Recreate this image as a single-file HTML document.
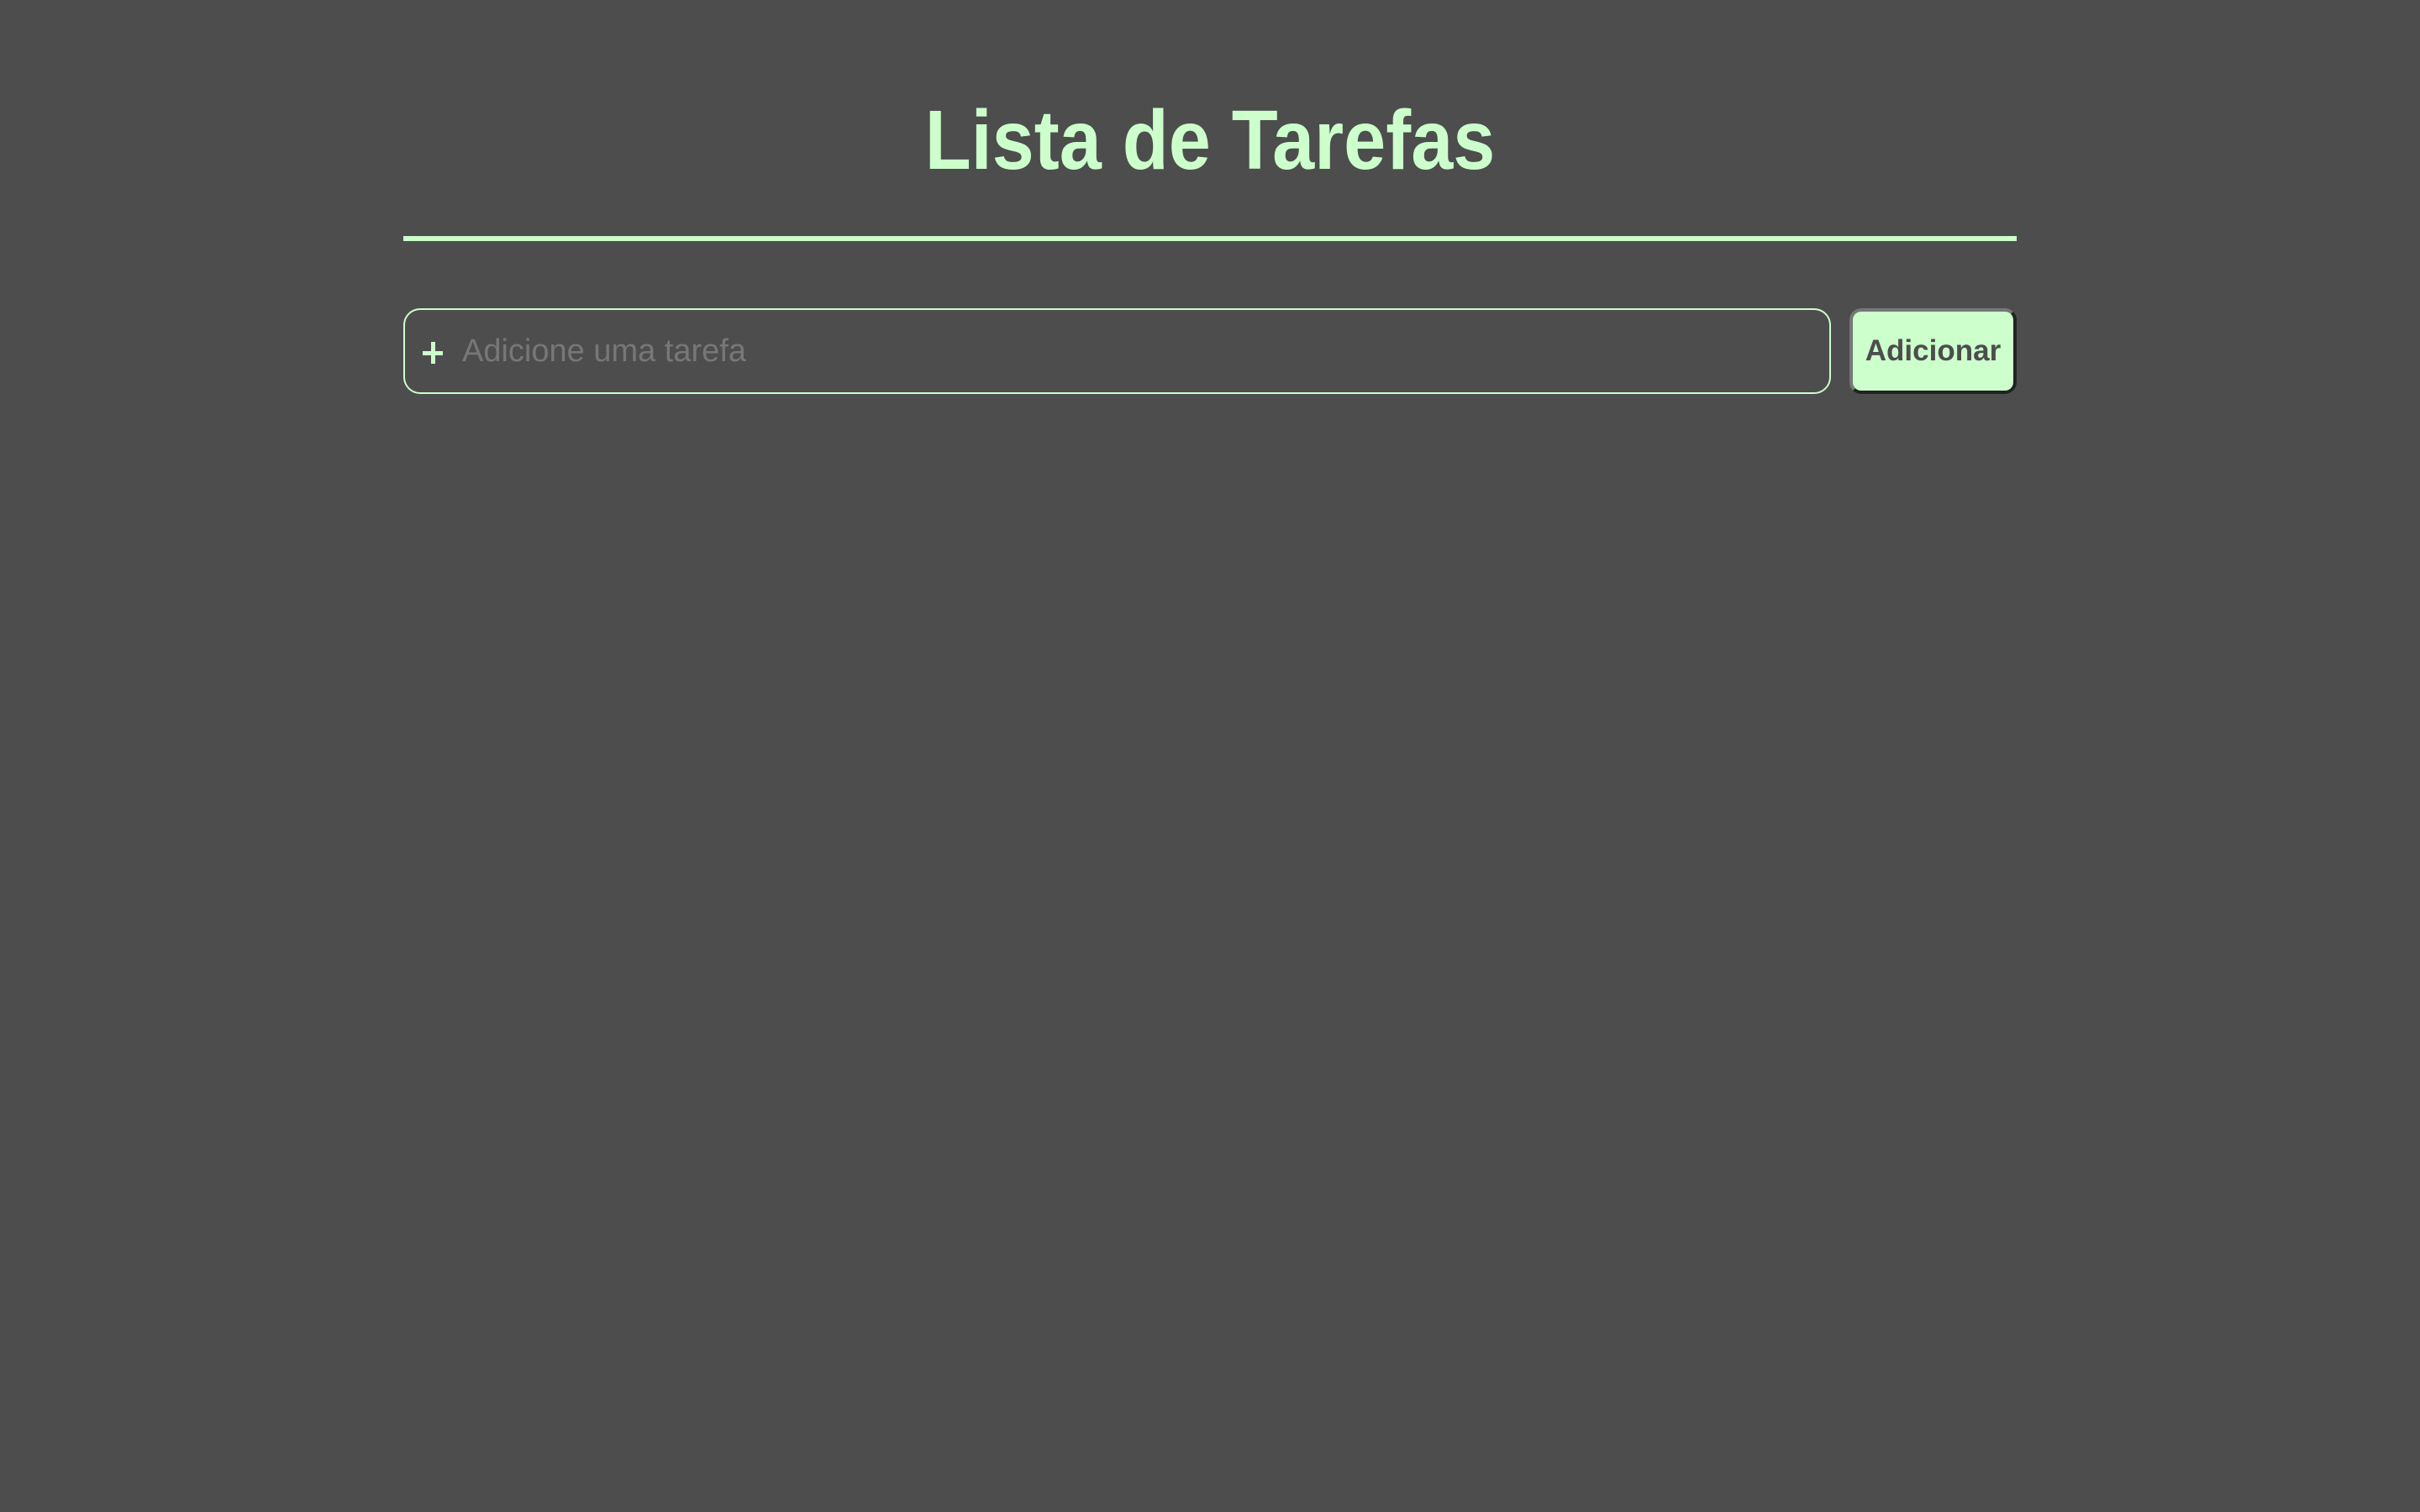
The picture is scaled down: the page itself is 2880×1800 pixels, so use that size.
<!DOCTYPE html>
<html><head><meta charset="utf-8"><style>
html,body{margin:0;padding:0;width:2880px;height:1800px;background:#4d4d4d;overflow:hidden;font-family:"Liberation Sans",Arial,sans-serif;}
.title{position:absolute;left:0;width:2880px;top:107px;text-align:center;color:#ccffcc;font-weight:bold;font-size:100px;line-height:120px;}
.title span{display:inline-block;transform:scaleX(0.9);}
.rule{position:absolute;left:480px;top:281px;width:1920px;height:6px;background:#ccffcc;}
.input{position:absolute;left:480px;top:367px;width:1695px;height:98px;border:2px solid #ccffcc;border-radius:20px;}
.plus1{position:absolute;left:503px;top:418px;width:24px;height:5px;background:#ccffcc;}
.plus2{position:absolute;left:513px;top:407px;width:5px;height:26px;background:#ccffcc;}
.ph{position:absolute;left:550px;top:396px;font-size:38px;line-height:44px;color:#777;}
.btn{position:absolute;left:2201px;top:367px;width:191px;height:94px;background:#ccffcc;border:4px solid;border-color:#777 #222 #222 #777;border-radius:14px;color:#4d4d4d;font-weight:bold;font-size:35px;text-align:center;line-height:94px;}
</style></head><body>
<div class="title"><span>Lista de Tarefas</span></div>
<div class="rule"></div>
<div class="input"></div>
<div class="plus1"></div><div class="plus2"></div>
<div class="ph">Adicione uma tarefa</div>
<div class="btn">Adicionar</div>
</body></html>
